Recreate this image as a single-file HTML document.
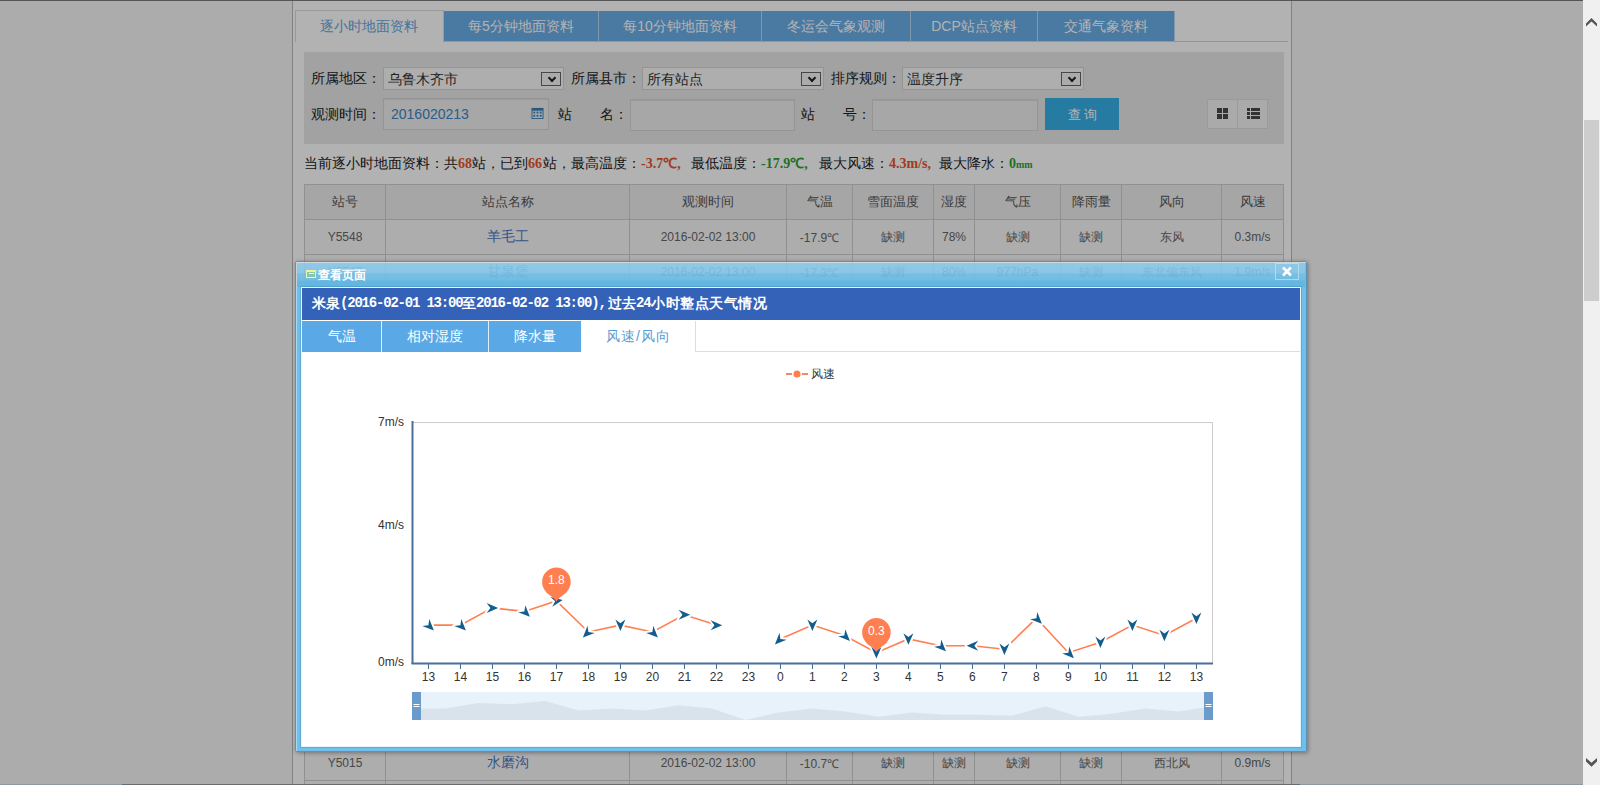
<!DOCTYPE html>
<html><head><meta charset="utf-8">
<style>
*{margin:0;padding:0;box-sizing:border-box}
html,body{width:1600px;height:785px;overflow:hidden;background:#f7f7f7;font-family:"Liberation Sans",sans-serif;position:relative}
.a{position:absolute}
.topline{left:0;top:0;width:1583px;height:1px;background:#7a7a7a}
.container{left:292px;top:1px;width:1000px;height:784px;background:#fff;border-left:1px solid #bbb;border-right:1px solid #bbb}
.tabbar{left:295px;top:10px;width:993px;height:32px;border-bottom:1px solid #d6d6d6}
.tab{position:absolute;top:11px;height:30px;background:#6aaee8;color:#fff;font-size:14px;line-height:30px;text-align:center;border-right:1px solid #b9dcf6}
.tab.act{top:10px;height:32px;background:#fff;color:#66a6dc;border:1px solid #ddd;border-bottom:none;line-height:31px;padding-right:2px}
.panel{left:304px;top:52px;width:980px;height:92px;background:#e8e8e8}
.lbl{position:absolute;font-size:14px;color:#222;line-height:16px;white-space:nowrap}
.sel{position:absolute;height:23px;background:#fafafa;border:1px solid #d4d4d4;font-size:14px;color:#333;line-height:22px;padding-left:4px}
.sel i{position:absolute;right:2px;top:4px;width:20px;height:14px;border:1px solid #666;background:#f5f5f5}
.sel i:after{content:"";position:absolute;left:7px;top:2px;width:4px;height:4px;border-right:2px solid #222;border-bottom:2px solid #222;transform:rotate(45deg)}
.inp{position:absolute;height:32px;background:#f0f0f0;border:1px solid #d6d6d6;box-shadow:inset 0 1px 1px rgba(0,0,0,.08)}
.btn{left:1045px;top:98px;width:74px;height:32px;background:#36b1e9;color:#fff;font-size:13px;text-align:center;line-height:34px;letter-spacing:3px;padding-left:3px}
.ig{left:1207px;top:99px;width:61px;height:30px;background:#f4f4f4;border:1px solid #ddd}
.summary{left:304px;top:155px;font-size:14px;color:#222;white-space:nowrap;line-height:16px}
.summary b{display:inline-block;font-family:"Liberation Serif",serif;font-weight:bold;font-size:14px}
.red{color:#e8552a}.grn{color:#2ea332}
table.t{position:absolute;left:304px;top:184px;border-collapse:collapse;table-layout:fixed;width:979px}
table.t td{border:1px solid #cfcfcf;text-align:center;font-size:12px;color:#666;height:35px;white-space:nowrap;overflow:hidden}
table.t tr.h td{background:#eee;color:#555;font-size:13px}
table.t tr.r td{background:#f8f8f8}
table.t a{color:#4a78c2;font-size:14px;text-decoration:none}
.overlay{left:0;top:0;width:1583px;height:785px;background:rgba(0,0,0,0.3)}
.bottomline{left:0;top:784px;width:1600px;height:1px;background:linear-gradient(90deg,#8d99a3 0,#8d99a3 122px,#6a6d70 122px,#6a6d70 1300px,#8d99a3 1300px)}
.sb{left:1583px;top:0;width:17px;height:785px;background:#f0f0f0}
.thumb{left:1584px;top:120px;width:15px;height:181px;background:#cdcdcd}
.modal{left:295px;top:261px;width:1012px;height:491px;border:1px solid #5d92b8;border-radius:2px;background:linear-gradient(rgba(0,0,0,0) 25px,#70bfeb 25px);box-shadow:1px 1px 4px rgba(0,0,0,.35)}
.mhl{left:296px;top:262px;width:1010px;height:489px;border-top:1px solid rgba(230,248,255,.6);border-left:1px solid rgba(230,248,255,.45)}
.mtitle{left:297px;top:263px;width:1008px;height:24px;background:linear-gradient(rgba(140,206,240,.86) 0,rgba(132,202,238,.86) 10px,rgba(112,192,234,.9) 11px,rgba(108,190,232,.9) 17px,rgba(96,184,228,.94) 18px,rgba(92,182,228,.95) 24px)}
.mstrip{left:296px;top:279px;width:1010px;height:8px;background:#64b8df}
.mcontent{left:301px;top:287px;width:1000px;height:460px;background:#fff;border:1px solid #e6f4fc;box-shadow:0 0 0 1px rgba(60,130,175,.35)}
.heading{left:302px;top:288px;width:998px;height:32px;background:#3462b9}
.hd{top:295px;color:#fff;font-size:14px;font-weight:bold;line-height:16px;white-space:nowrap}
.mono{font-family:"Liberation Mono",monospace;letter-spacing:-1.2px}
.mtab{position:absolute;top:321px;height:31px;background:#5aa9e6;color:#fff;font-size:14px;line-height:31px;text-align:center;border-right:1px solid #dfeffb}
.mtab.act{background:#fff;color:#5b9ccf;border-right:1px solid #ddd;letter-spacing:1px;padding-left:1px}
.mtabline{left:695px;top:351px;width:605px;height:1px;background:#ddd}
.close{left:1275px;top:263px;width:24px;height:17px;border:1px solid rgba(190,232,252,.7)}
.micon{left:306px;top:270px;width:10px;height:8px;border:1px solid #e8f7b0;border-top:2px solid #f2f29a;background:#86c7a8}
.micon:after{content:"";position:absolute;left:2px;top:1px;width:5px;height:3px;border-top:1px solid #fff;border-bottom:1px solid #fff}
.mt{left:318px;top:268px;color:#fff;font-size:12px;font-weight:bold;line-height:14px}
</style></head><body>
<div class="a topline"></div>
<div class="a container"></div>
<div class="a tabbar"></div>
<div class="tab act" style="left:295px;width:149px">逐小时地面资料</div>
<div class="tab" style="left:444px;width:155px">每5分钟地面资料</div>
<div class="tab" style="left:599px;width:163px">每10分钟地面资料</div>
<div class="tab" style="left:762px;width:149px">冬运会气象观测</div>
<div class="tab" style="left:911px;width:127px">DCP站点资料</div>
<div class="tab" style="left:1038px;width:137px">交通气象资料</div>

<div class="a panel"></div>
<div class="lbl" style="left:311px;top:70px">所属地区：</div>
<div class="sel" style="left:383px;top:67px;width:181px">乌鲁木齐市<i></i></div>
<div class="lbl" style="left:571px;top:70px">所属县市：</div>
<div class="sel" style="left:642px;top:67px;width:182px">所有站点<i></i></div>
<div class="lbl" style="left:831px;top:70px">排序规则：</div>
<div class="sel" style="left:902px;top:67px;width:182px">温度升序<i></i></div>

<div class="lbl" style="left:311px;top:106px">观测时间：</div>
<div class="inp" style="left:383px;top:98px;width:166px"><span style="position:absolute;left:7px;top:7px;font-size:14px;color:#3a86c4">2016020213</span>
<svg style="position:absolute;left:147px;top:8px" width="13" height="12" viewBox="0 0 13 13"><rect x="0" y="1" width="13" height="12" fill="#3a7fb5"/><rect x="1" y="4" width="11" height="8" fill="#e9f1f8"/><g fill="#3a7fb5"><rect x="2" y="5" width="2" height="2"/><rect x="5.5" y="5" width="2" height="2"/><rect x="9" y="5" width="2" height="2"/><rect x="2" y="8.5" width="2" height="2"/><rect x="5.5" y="8.5" width="2" height="2"/><rect x="9" y="8.5" width="2" height="2"/></g></svg></div>
<div class="lbl" style="left:558px;top:106px">站</div>
<div class="lbl" style="left:600px;top:106px">名：</div>
<div class="inp" style="left:630px;top:99px;width:165px"></div>
<div class="lbl" style="left:801px;top:106px">站</div>
<div class="lbl" style="left:843px;top:106px">号：</div>
<div class="inp" style="left:872px;top:99px;width:166px"></div>
<div class="a btn">查询</div>
<div class="a ig"><div style="position:absolute;left:29px;top:0;width:1px;height:28px;background:#ddd"></div>
<svg style="position:absolute;left:9px;top:8px" width="12" height="12"><g fill="#4a4a4a"><rect x="0" y="0" width="5" height="5"/><rect x="6" y="0" width="5" height="5"/><rect x="0" y="6" width="5" height="5"/><rect x="6" y="6" width="5" height="5"/></g></svg>
<svg style="position:absolute;left:39px;top:8px" width="13" height="12"><g fill="#4a4a4a"><rect x="0" y="0" width="3" height="3"/><rect x="4" y="0" width="9" height="3"/><rect x="0" y="4" width="3" height="3"/><rect x="4" y="4" width="9" height="3"/><rect x="0" y="8" width="3" height="3"/><rect x="4" y="8" width="9" height="3"/></g></svg></div>

<div class="a summary">当前逐小时地面资料：共<b class="red" style="width:14px">68</b>站，已到<b class="red" style="width:15px">66</b>站，最高温度：<b class="red" style="width:50px">-3.7℃,</b>最低温度：<b class="grn" style="width:58px">-17.9℃,</b>最大风速：<b class="red" style="width:50px">4.3m/s,</b>最大降水：<b class="grn" style="width:22px">0<span style="font-size:10px">mm</span></b></div>

<table class="t">
<colgroup><col style="width:81px"><col style="width:244px"><col style="width:157px"><col style="width:66px"><col style="width:81px"><col style="width:41px"><col style="width:86px"><col style="width:61px"><col style="width:100px"><col style="width:62px"></colgroup>
<tr class="h"><td>站号</td><td>站点名称</td><td>观测时间</td><td>气温</td><td>雪面温度</td><td>湿度</td><td>气压</td><td>降雨量</td><td>风向</td><td>风速</td></tr>
<tr class="r"><td>Y5548</td><td><a>羊毛工</a></td><td>2016-02-02 13:00</td><td>-17.9℃</td><td>缺测</td><td>78%</td><td>缺测</td><td>缺测</td><td>东风</td><td>0.3m/s</td></tr>
<tr class="r"><td>Y5547</td><td><a>甘泉堡</a></td><td>2016-02-02 13:00</td><td>-17.3℃</td><td>缺测</td><td>80%</td><td>977hPa</td><td>缺测</td><td>东北偏东风</td><td>1.9m/s</td></tr>
<tr class="r"><td style="height:456px"></td><td></td><td></td><td></td><td></td><td></td><td></td><td></td><td></td><td></td></tr>
<tr class="r"><td>Y5015</td><td><a>水磨沟</a></td><td>2016-02-02 13:00</td><td>-10.7℃</td><td>缺测</td><td>缺测</td><td>缺测</td><td>缺测</td><td>西北风</td><td>0.9m/s</td></tr>
<tr class="r"><td>Y5016</td><td><a>雅玛里克</a></td><td>2016-02-02 13:00</td><td>-10.1℃</td><td>缺测</td><td>缺测</td><td>缺测</td><td>缺测</td><td>西北风</td><td>0.9m/s</td></tr>
</table>

<div class="a overlay"></div>
<div class="a bottomline"></div>
<div class="a sb"></div>
<div class="a thumb"></div>
<svg class="a" style="left:0;top:0" width="1600" height="785"><path d="M1586,23.5 L1591.5,18 L1597,23.5 L1597,26.5 L1591.5,21.5 L1586,26.5 Z" fill="#555"/><path d="M1586,758 L1591.5,762.8 L1597,758 L1597,761.5 L1591.5,766.8 L1586,761.5 Z" fill="#555"/></svg>
<div class="a modal"></div>
<div class="a mtitle"></div>
<div class="a mhl"></div>
<div class="a micon"></div>
<div class="a mt">查看页面</div>
<div class="a close"><svg width="22" height="15" style="position:absolute;left:0;top:0"><path d="M7,3.5 L15,11.5 M15,3.5 L7,11.5" stroke="#fff" stroke-width="2.6"/></svg></div>
<div class="a mcontent"></div>
<div class="a heading"></div>
<div class="a hd" style="left:312px">米泉</div>
<div class="a hd mono" style="left:340px">(2016-02-01 13:00</div>
<div class="a hd" style="left:462px">至</div>
<div class="a hd mono" style="left:476px">2016-02-02 13:00),</div>
<div class="a hd" style="left:608px">过去</div>
<div class="a hd mono" style="left:636px">24</div>
<div class="a hd" style="left:651px;letter-spacing:0.5px">小时整点天气情况</div>
<div class="mtab" style="left:302px;width:80px">气温</div>
<div class="mtab" style="left:382px;width:107px">相对湿度</div>
<div class="mtab" style="left:489px;width:92px;border-right:none">降水量</div>
<div class="mtab act" style="left:581px;width:115px">风速/风向</div>
<div class="a mtabline"></div>
<svg width="1600" height="785" style="position:absolute;left:0;top:0">
<line x1="786" y1="374" x2="808" y2="374" stroke="#f08a66" stroke-width="2"/>
<circle cx="797" cy="374" r="4.3" fill="#ff7f50" stroke="#fff" stroke-width="1.5"/>
<text x="811" y="377.5" font-size="12" fill="#333" font-family="Liberation Sans, sans-serif">风速</text>
<line x1="412" y1="422.5" x2="1213" y2="422.5" stroke="#ccc" stroke-width="1"/>
<line x1="1212.5" y1="422" x2="1212.5" y2="663" stroke="#ccc" stroke-width="1"/>
<line x1="412.5" y1="421" x2="412.5" y2="664" stroke="#48709a" stroke-width="2"/>
<line x1="411.5" y1="663.5" x2="1213" y2="663.5" stroke="#48709a" stroke-width="2"/>
<text x="404" y="426" text-anchor="end" font-size="12" fill="#333" font-family="Liberation Sans, sans-serif">7m/s</text>
<text x="404" y="529" text-anchor="end" font-size="12" fill="#333" font-family="Liberation Sans, sans-serif">4m/s</text>
<text x="404" y="666" text-anchor="end" font-size="12" fill="#333" font-family="Liberation Sans, sans-serif">0m/s</text>
<line x1="428.5" y1="664" x2="428.5" y2="669" stroke="#48709a" stroke-width="1"/>
<text x="428.4" y="681" text-anchor="middle" font-size="12" fill="#333" font-family="Liberation Sans, sans-serif">13</text>
<line x1="460.5" y1="664" x2="460.5" y2="669" stroke="#48709a" stroke-width="1"/>
<text x="460.4" y="681" text-anchor="middle" font-size="12" fill="#333" font-family="Liberation Sans, sans-serif">14</text>
<line x1="492.5" y1="664" x2="492.5" y2="669" stroke="#48709a" stroke-width="1"/>
<text x="492.4" y="681" text-anchor="middle" font-size="12" fill="#333" font-family="Liberation Sans, sans-serif">15</text>
<line x1="524.5" y1="664" x2="524.5" y2="669" stroke="#48709a" stroke-width="1"/>
<text x="524.4" y="681" text-anchor="middle" font-size="12" fill="#333" font-family="Liberation Sans, sans-serif">16</text>
<line x1="556.5" y1="664" x2="556.5" y2="669" stroke="#48709a" stroke-width="1"/>
<text x="556.4" y="681" text-anchor="middle" font-size="12" fill="#333" font-family="Liberation Sans, sans-serif">17</text>
<line x1="588.5" y1="664" x2="588.5" y2="669" stroke="#48709a" stroke-width="1"/>
<text x="588.4" y="681" text-anchor="middle" font-size="12" fill="#333" font-family="Liberation Sans, sans-serif">18</text>
<line x1="620.5" y1="664" x2="620.5" y2="669" stroke="#48709a" stroke-width="1"/>
<text x="620.4" y="681" text-anchor="middle" font-size="12" fill="#333" font-family="Liberation Sans, sans-serif">19</text>
<line x1="652.5" y1="664" x2="652.5" y2="669" stroke="#48709a" stroke-width="1"/>
<text x="652.4" y="681" text-anchor="middle" font-size="12" fill="#333" font-family="Liberation Sans, sans-serif">20</text>
<line x1="684.5" y1="664" x2="684.5" y2="669" stroke="#48709a" stroke-width="1"/>
<text x="684.4" y="681" text-anchor="middle" font-size="12" fill="#333" font-family="Liberation Sans, sans-serif">21</text>
<line x1="716.5" y1="664" x2="716.5" y2="669" stroke="#48709a" stroke-width="1"/>
<text x="716.4" y="681" text-anchor="middle" font-size="12" fill="#333" font-family="Liberation Sans, sans-serif">22</text>
<line x1="748.5" y1="664" x2="748.5" y2="669" stroke="#48709a" stroke-width="1"/>
<text x="748.4" y="681" text-anchor="middle" font-size="12" fill="#333" font-family="Liberation Sans, sans-serif">23</text>
<line x1="780.5" y1="664" x2="780.5" y2="669" stroke="#48709a" stroke-width="1"/>
<text x="780.4" y="681" text-anchor="middle" font-size="12" fill="#333" font-family="Liberation Sans, sans-serif">0</text>
<line x1="812.5" y1="664" x2="812.5" y2="669" stroke="#48709a" stroke-width="1"/>
<text x="812.4" y="681" text-anchor="middle" font-size="12" fill="#333" font-family="Liberation Sans, sans-serif">1</text>
<line x1="844.5" y1="664" x2="844.5" y2="669" stroke="#48709a" stroke-width="1"/>
<text x="844.4" y="681" text-anchor="middle" font-size="12" fill="#333" font-family="Liberation Sans, sans-serif">2</text>
<line x1="876.5" y1="664" x2="876.5" y2="669" stroke="#48709a" stroke-width="1"/>
<text x="876.4" y="681" text-anchor="middle" font-size="12" fill="#333" font-family="Liberation Sans, sans-serif">3</text>
<line x1="908.5" y1="664" x2="908.5" y2="669" stroke="#48709a" stroke-width="1"/>
<text x="908.4" y="681" text-anchor="middle" font-size="12" fill="#333" font-family="Liberation Sans, sans-serif">4</text>
<line x1="940.5" y1="664" x2="940.5" y2="669" stroke="#48709a" stroke-width="1"/>
<text x="940.4" y="681" text-anchor="middle" font-size="12" fill="#333" font-family="Liberation Sans, sans-serif">5</text>
<line x1="972.5" y1="664" x2="972.5" y2="669" stroke="#48709a" stroke-width="1"/>
<text x="972.4" y="681" text-anchor="middle" font-size="12" fill="#333" font-family="Liberation Sans, sans-serif">6</text>
<line x1="1004.5" y1="664" x2="1004.5" y2="669" stroke="#48709a" stroke-width="1"/>
<text x="1004.4" y="681" text-anchor="middle" font-size="12" fill="#333" font-family="Liberation Sans, sans-serif">7</text>
<line x1="1036.5" y1="664" x2="1036.5" y2="669" stroke="#48709a" stroke-width="1"/>
<text x="1036.4" y="681" text-anchor="middle" font-size="12" fill="#333" font-family="Liberation Sans, sans-serif">8</text>
<line x1="1068.5" y1="664" x2="1068.5" y2="669" stroke="#48709a" stroke-width="1"/>
<text x="1068.4" y="681" text-anchor="middle" font-size="12" fill="#333" font-family="Liberation Sans, sans-serif">9</text>
<line x1="1100.5" y1="664" x2="1100.5" y2="669" stroke="#48709a" stroke-width="1"/>
<text x="1100.4" y="681" text-anchor="middle" font-size="12" fill="#333" font-family="Liberation Sans, sans-serif">10</text>
<line x1="1132.5" y1="664" x2="1132.5" y2="669" stroke="#48709a" stroke-width="1"/>
<text x="1132.4" y="681" text-anchor="middle" font-size="12" fill="#333" font-family="Liberation Sans, sans-serif">11</text>
<line x1="1164.5" y1="664" x2="1164.5" y2="669" stroke="#48709a" stroke-width="1"/>
<text x="1164.4" y="681" text-anchor="middle" font-size="12" fill="#333" font-family="Liberation Sans, sans-serif">12</text>
<line x1="1196.5" y1="664" x2="1196.5" y2="669" stroke="#48709a" stroke-width="1"/>
<text x="1196.4" y="681" text-anchor="middle" font-size="12" fill="#333" font-family="Liberation Sans, sans-serif">13</text>
<path d="M428.4,625.1 L460.4,625.1 L492.4,607.9 L524.4,611.4 L556.4,601.0 L588.4,632.0 L620.4,625.1 L652.4,632.0 L684.4,614.8 L716.4,625.1" fill="none" stroke="#ff7f50" stroke-width="1.6"/>
<path d="M780.4,638.9 L812.4,625.1 L844.4,635.5 L876.4,652.7 L908.4,638.9 L940.4,645.8 L972.4,645.8 L1004.4,649.2 L1036.4,618.2 L1068.4,652.7 L1100.4,642.3 L1132.4,625.1 L1164.4,635.5 L1196.4,618.2" fill="none" stroke="#ff7f50" stroke-width="1.6"/>
<path d="M0,-5.75 L5.0,5.75 L0,1.9549999999999996 L-5.0,5.75 Z" transform="translate(429.81,626.54) rotate(135)" fill="#135d8e" stroke="#fff" stroke-width="4" stroke-linejoin="round" paint-order="stroke"/>
<path d="M0,-5.75 L5.0,5.75 L0,1.9549999999999996 L-5.0,5.75 Z" transform="translate(461.81,626.54) rotate(135)" fill="#135d8e" stroke="#fff" stroke-width="4" stroke-linejoin="round" paint-order="stroke"/>
<path d="M0,-5.75 L5.0,5.75 L0,1.9549999999999996 L-5.0,5.75 Z" transform="translate(492.40,607.91) rotate(90)" fill="#135d8e" stroke="#fff" stroke-width="4" stroke-linejoin="round" paint-order="stroke"/>
<path d="M0,-5.75 L5.0,5.75 L0,1.9549999999999996 L-5.0,5.75 Z" transform="translate(525.81,612.77) rotate(135)" fill="#135d8e" stroke="#fff" stroke-width="4" stroke-linejoin="round" paint-order="stroke"/>
<path d="M0,-5.75 L5.0,5.75 L0,1.9549999999999996 L-5.0,5.75 Z" transform="translate(557.07,600.91) rotate(80)" fill="#135d8e" stroke="#fff" stroke-width="4" stroke-linejoin="round" paint-order="stroke"/>
<path d="M0,-5.75 L5.0,5.75 L0,1.9549999999999996 L-5.0,5.75 Z" transform="translate(586.99,633.43) rotate(225)" fill="#135d8e" stroke="#fff" stroke-width="4" stroke-linejoin="round" paint-order="stroke"/>
<path d="M0,-5.75 L5.0,5.75 L0,1.9549999999999996 L-5.0,5.75 Z" transform="translate(620.40,625.13) rotate(180)" fill="#135d8e" stroke="#fff" stroke-width="4" stroke-linejoin="round" paint-order="stroke"/>
<path d="M0,-5.75 L5.0,5.75 L0,1.9549999999999996 L-5.0,5.75 Z" transform="translate(653.81,633.43) rotate(135)" fill="#135d8e" stroke="#fff" stroke-width="4" stroke-linejoin="round" paint-order="stroke"/>
<path d="M0,-5.75 L5.0,5.75 L0,1.9549999999999996 L-5.0,5.75 Z" transform="translate(684.40,614.80) rotate(90)" fill="#135d8e" stroke="#fff" stroke-width="4" stroke-linejoin="round" paint-order="stroke"/>
<path d="M0,-5.75 L5.0,5.75 L0,1.9549999999999996 L-5.0,5.75 Z" transform="translate(716.40,625.13) rotate(90)" fill="#135d8e" stroke="#fff" stroke-width="4" stroke-linejoin="round" paint-order="stroke"/>
<path d="M0,-5.75 L5.0,5.75 L0,1.9549999999999996 L-5.0,5.75 Z" transform="translate(778.99,640.31) rotate(225)" fill="#135d8e" stroke="#fff" stroke-width="4" stroke-linejoin="round" paint-order="stroke"/>
<path d="M0,-5.75 L5.0,5.75 L0,1.9549999999999996 L-5.0,5.75 Z" transform="translate(812.40,625.13) rotate(180)" fill="#135d8e" stroke="#fff" stroke-width="4" stroke-linejoin="round" paint-order="stroke"/>
<path d="M0,-5.75 L5.0,5.75 L0,1.9549999999999996 L-5.0,5.75 Z" transform="translate(845.81,636.87) rotate(135)" fill="#135d8e" stroke="#fff" stroke-width="4" stroke-linejoin="round" paint-order="stroke"/>
<path d="M0,-5.75 L5.0,5.75 L0,1.9549999999999996 L-5.0,5.75 Z" transform="translate(876.40,652.67) rotate(180)" fill="#135d8e" stroke="#fff" stroke-width="4" stroke-linejoin="round" paint-order="stroke"/>
<path d="M0,-5.75 L5.0,5.75 L0,1.9549999999999996 L-5.0,5.75 Z" transform="translate(908.40,638.90) rotate(180)" fill="#135d8e" stroke="#fff" stroke-width="4" stroke-linejoin="round" paint-order="stroke"/>
<path d="M0,-5.75 L5.0,5.75 L0,1.9549999999999996 L-5.0,5.75 Z" transform="translate(941.81,647.20) rotate(135)" fill="#135d8e" stroke="#fff" stroke-width="4" stroke-linejoin="round" paint-order="stroke"/>
<path d="M0,-5.75 L5.0,5.75 L0,1.9549999999999996 L-5.0,5.75 Z" transform="translate(972.40,645.79) rotate(270)" fill="#135d8e" stroke="#fff" stroke-width="4" stroke-linejoin="round" paint-order="stroke"/>
<path d="M0,-5.75 L5.0,5.75 L0,1.9549999999999996 L-5.0,5.75 Z" transform="translate(1004.40,649.23) rotate(180)" fill="#135d8e" stroke="#fff" stroke-width="4" stroke-linejoin="round" paint-order="stroke"/>
<path d="M0,-5.75 L5.0,5.75 L0,1.9549999999999996 L-5.0,5.75 Z" transform="translate(1037.81,619.66) rotate(135)" fill="#135d8e" stroke="#fff" stroke-width="4" stroke-linejoin="round" paint-order="stroke"/>
<path d="M0,-5.75 L5.0,5.75 L0,1.9549999999999996 L-5.0,5.75 Z" transform="translate(1069.81,654.09) rotate(135)" fill="#135d8e" stroke="#fff" stroke-width="4" stroke-linejoin="round" paint-order="stroke"/>
<path d="M0,-5.75 L5.0,5.75 L0,1.9549999999999996 L-5.0,5.75 Z" transform="translate(1100.40,642.34) rotate(180)" fill="#135d8e" stroke="#fff" stroke-width="4" stroke-linejoin="round" paint-order="stroke"/>
<path d="M0,-5.75 L5.0,5.75 L0,1.9549999999999996 L-5.0,5.75 Z" transform="translate(1132.40,625.13) rotate(180)" fill="#135d8e" stroke="#fff" stroke-width="4" stroke-linejoin="round" paint-order="stroke"/>
<path d="M0,-5.75 L5.0,5.75 L0,1.9549999999999996 L-5.0,5.75 Z" transform="translate(1164.40,635.46) rotate(180)" fill="#135d8e" stroke="#fff" stroke-width="4" stroke-linejoin="round" paint-order="stroke"/>
<path d="M0,-5.75 L5.0,5.75 L0,1.9549999999999996 L-5.0,5.75 Z" transform="translate(1196.40,618.24) rotate(180)" fill="#135d8e" stroke="#fff" stroke-width="4" stroke-linejoin="round" paint-order="stroke"/>
<path d="M556.4,601.5 C553.4,596.5 545.4,593.0 545.4,591.0 A14.3,14.3 0 1 1 567.4,591.0 C567.4,593.0 559.4,596.5 556.4,601.5 Z" fill="#ff7f50"/><text x="556.4" y="584.3" text-anchor="middle" font-size="12" fill="#fff" font-family="Liberation Sans, sans-serif">1.8</text>
<path d="M876.4,652 C873.4,647 865.4,643.5 865.4,641.5 A14.3,14.3 0 1 1 887.4,641.5 C887.4,643.5 879.4,647 876.4,652 Z" fill="#ff7f50"/><text x="876.4" y="634.8" text-anchor="middle" font-size="12" fill="#fff" font-family="Liberation Sans, sans-serif">0.3</text>
<rect x="412" y="692" width="801" height="28" fill="#e7f2fb"/>
<path d="M412,720 L412.0,708.4 L445.3,708.4 L478.7,703.1 L512.0,704.2 L545.3,701.0 L578.7,710.5 L612.0,708.4 L645.3,710.5 L678.7,705.2 L712.0,708.4 L745.3,720.0 L778.7,712.6 L812.0,708.4 L845.3,711.6 L878.7,716.8 L912.0,712.6 L945.3,714.7 L978.7,714.7 L1012.0,715.8 L1045.3,706.3 L1078.7,716.8 L1112.0,713.7 L1145.3,708.4 L1178.7,711.6 L1212.0,706.3 L1212,720 Z" fill="#d9e3ec"/>
<rect x="412" y="692" width="9" height="28" fill="#6b9bcb"/>
<rect x="413.5" y="704" width="6" height="1" fill="#fff"/><rect x="413.5" y="706" width="6" height="1" fill="#fff"/>
<rect x="1204" y="692" width="9" height="28" fill="#6b9bcb"/>
<rect x="1205.5" y="704" width="6" height="1" fill="#fff"/><rect x="1205.5" y="706" width="6" height="1" fill="#fff"/>
</svg>
</body></html>
